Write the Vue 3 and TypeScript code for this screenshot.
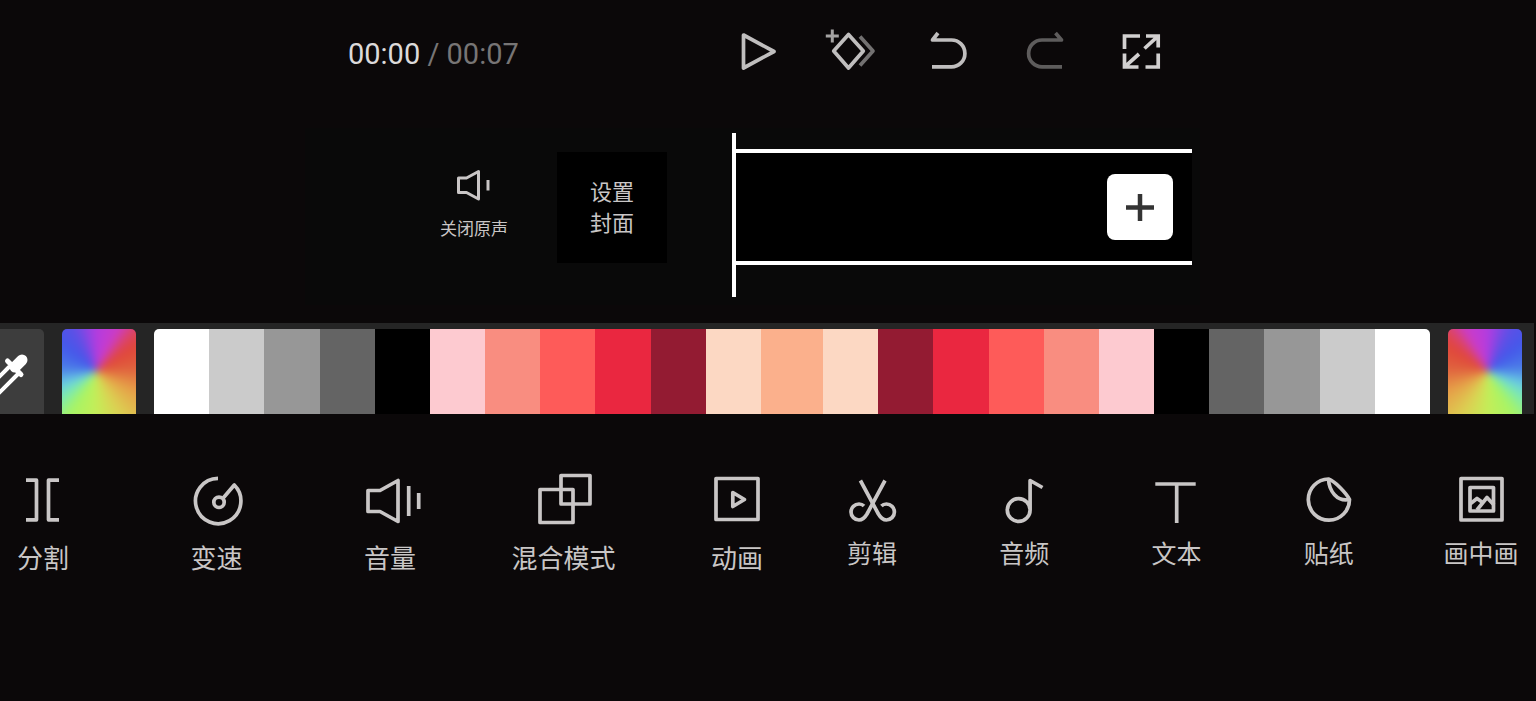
<script setup lang="ts">
interface Tool {
  label: string
  paths: string[]
}

const swatchHalf: string[] = [
  '#ffffff', '#cbcbcb', '#979797', '#646464', '#000000', '#fdcad0',
  '#f98d80', '#fe5b59', '#ea2740', '#931b32', '#fcd8c3',
]
const swatches: string[] = [...swatchHalf, '#fbb08c', ...[...swatchHalf].reverse()]

const clipTools: Tool[] = [
  { label: '分割', paths: ['M13 10.2H23.5V49.8H13', 'M46 10.2H35.5V49.8H46'] },
  {
    label: '变速',
    paths: [
      'M31 8.3A22.7 22.7 0 1 0 47.3 15L36 28.3',
      'M37.2 32.3A5.2 5.2 0 1 1 26.8 32.3A5.2 5.2 0 1 1 37.2 32.3Z',
    ],
  },
  {
    label: '音量',
    paths: ['M8 20.5H20L38 10.5V51.5L20 41.5H8Z', 'M48.7 16V46', 'M58.7 23V39'],
  },
  { label: '混合模式', paths: ['M6 19.5H39V52.5H6Z', 'M27 5.5H56V34H27Z'] },
  { label: '动画', paths: ['M9 8.5H51V49.5H9Z', 'M25.8 22.5L37.5 29.5L25.8 36.5Z'] },
]

const mainTools: Tool[] = [
  {
    label: '剪辑',
    paths: [
      'M43 10.5L25 44Q21.5 50 17 50A8 8 0 1 1 17 34Q20 34 22 36',
      'M18.4 10.5L36.4 44Q39.9 50 44.4 50A8 8 0 1 0 44.4 34Q41.4 34 39.4 36',
    ],
  },
  {
    label: '音频',
    paths: ['M36.1 40A11.4 11.4 0 1 1 13.3 40A11.4 11.4 0 1 1 36.1 40V10.5L48.5 17.5'],
  },
  { label: '文本', paths: ['M8.3 14H48.7', 'M29.7 14V53'] },
  {
    label: '贴纸',
    paths: ['M29.5 9A20.6 20.6 0 1 0 50.5 29.5C48 24 36 11 29.5 9Z', 'M29.5 9C30 21 38 32 50.5 29.5'],
  },
  {
    label: '画中画',
    paths: [
      'M10 8.5H51V50H10Z',
      'M19 17.5H42.5V41H19Z',
      'M19 34L26 28.5L31 32',
      'M26 40L36 27.5L43 35',
    ],
  },
]
</script>

<template>
  <main class="editor">
    <header class="transport">
      <div class="time">
        <span class="now">00:00</span> / 00:07
      </div>
      <div class="controls">
        <button type="button" aria-label="播放">
          <svg class="ctl" viewBox="0 0 60 48"><path d="M15.5 8L46 24.5L15.5 41Z" /></svg>
        </button>
        <button type="button" aria-label="关键帧">
          <svg class="ctl" viewBox="0 0 60 48">
            <path class="dim" d="M36 9.5L49 24L36 38.5" />
            <path d="M24.5 7.5L39.3 24L24.5 41L9.7 24Z" />
            <path class="thin" d="M8.3 2.5V15.5M1.8 9H14.8" />
          </svg>
        </button>
        <button type="button" aria-label="撤销">
          <svg class="ctl" viewBox="0 0 60 48">
            <path d="M18 6L12.5 13H31.5A13.4 13.4 0 0 1 31.5 39.8H12" />
          </svg>
        </button>
        <button type="button" aria-label="重做">
          <svg class="ctl" viewBox="0 0 60 48">
            <path class="off" d="M39.5 6L45.5 13H26A13.4 13.4 0 0 0 26 39.8H46" />
          </svg>
        </button>
        <button type="button" aria-label="全屏">
          <svg class="ctl square" viewBox="0 0 60 48">
            <path d="M28 9H12.5V22M46.2 26.5V40H33.5" />
            <path d="M34 9H46.2V20.5M46 9.2L32.5 21.5" />
            <path d="M12.5 26.5V40H26.5M12.7 39.8L27 27" />
          </svg>
        </button>
      </div>
    </header>

    <section class="timeline">
      <div class="panel">
        <button type="button" class="mute">
          <svg viewBox="0 0 44 40">
            <path d="M6.5 13H14.5L26.5 6.5V34L14.5 27.5H6.5Z" />
            <path d="M36 15V25.5" />
          </svg>
          <span>关闭原声</span>
        </button>
        <button type="button" class="cover">设置<br>封面</button>
        <div class="track">
          <div class="playhead"></div>
          <div class="clip">
            <button type="button" class="add" aria-label="添加">
              <svg viewBox="0 0 28 28"><path d="M14 1V28M0 14.5H28" /></svg>
            </button>
          </div>
        </div>
      </div>
    </section>

    <section class="palette">
      <button type="button" class="dropper" aria-label="吸管">
        <svg viewBox="0 0 44 85">
          <path class="bulb" d="M15 38L22 31" />
          <path class="collar" d="M7.5 32L21 45.5" />
          <path class="tube" d="M9 38L-6 53M18 45L-6 69" />
        </svg>
      </button>
      <button type="button" class="spectrum" aria-label="色谱"></button>
      <div class="strip">
        <button
          v-for="(color, i) in swatches"
          :key="i"
          type="button"
          class="swatch"
          :class="{ middle: i === swatchHalf.length }"
          :style="{ backgroundColor: color }"
          :aria-label="color"
        ></button>
      </div>
      <button type="button" class="spectrum mirrored" aria-label="色谱"></button>
    </section>

    <nav class="tools">
      <div class="group clip-group">
        <button v-for="tool in clipTools" :key="tool.label" type="button" class="tool">
          <svg viewBox="0 0 60 60"><path v-for="d in tool.paths" :key="d" :d="d" /></svg>
          <span>{{ tool.label }}</span>
        </button>
      </div>
      <div class="group main-group">
        <button v-for="tool in mainTools" :key="tool.label" type="button" class="tool">
          <svg viewBox="0 0 60 60"><path v-for="d in tool.paths" :key="d" :d="d" /></svg>
          <span>{{ tool.label }}</span>
        </button>
      </div>
    </nav>
  </main>
</template>

<style>
html,
body {
  margin: 0;
  background: #0b0809;
}
</style>

<style scoped>
.editor {
  min-height: 100vh;
  overflow: hidden;
  background: #0b0809;
  color: #c9c6c6;
  font-family: Roboto, "Noto Sans CJK SC", sans-serif;
}

button {
  margin: 0;
  padding: 0;
  border: 0;
  background: none;
  color: inherit;
  font: inherit;
  cursor: pointer;
}

svg {
  display: block;
  overflow: visible;
  fill: none;
  stroke: #c9c6c6;
}

.transport {
  display: grid;
  grid-template-columns: 348fr 362fr 480fr 346fr;
  align-items: start;
  padding: 27px 0 47px;
}

.time {
  grid-column: 2;
  font-size: 29px;
  line-height: 54px;
  white-space: nowrap;
  color: #777575;
}

.now {
  color: #dcdada;
}

.controls {
  grid-column: 3;
  display: grid;
  grid-template-columns: repeat(5, 1fr);
  justify-items: center;
}

.ctl {
  width: 60px;
  height: 48px;
  stroke-width: 3.7;
  stroke-linejoin: round;
  stroke: #c0bebe;
}

.ctl.square {
  stroke-linejoin: miter;
  stroke: #d2d0d0;
}

.ctl .dim {
  stroke: #737171;
}

.ctl .thin {
  stroke: #a5a3a3;
  stroke-width: 3;
}

.ctl .off {
  stroke: #5e5c5c;
}

.timeline {
  display: grid;
  grid-template-columns: 305fr 895fr 336fr;
  padding-bottom: 18px;
}

.panel {
  grid-column: 2;
  display: grid;
  grid-template-columns: 113fr 112fr 27fr 110fr 65fr 460fr 8fr;
  align-items: start;
  padding: 5px 0 8px;
  background: #090909;
}

.mute {
  grid-column: 2;
  display: flex;
  flex-direction: column;
  align-items: center;
  gap: 12px;
  margin-top: 32px;
  font-size: 17px;
  line-height: 24px;
  white-space: nowrap;
}

.mute svg {
  width: 44px;
  height: 40px;
  stroke-width: 3;
  stroke-linejoin: round;
}

.cover {
  grid-column: 4;
  height: 111px;
  margin-top: 19px;
  background: #000;
  font-size: 22px;
  line-height: 31px;
}

.track {
  grid-column: 6;
  display: flex;
  align-items: flex-start;
}

.playhead {
  width: 4px;
  height: 164px;
  background: #fff;
}

.clip {
  flex: 1;
  display: flex;
  align-items: center;
  justify-content: flex-end;
  box-sizing: border-box;
  height: 116px;
  margin-top: 16px;
  padding-right: 19px;
  border-top: 4px solid #fff;
  border-bottom: 4px solid #fff;
  background: #000;
}

.add {
  display: flex;
  align-items: center;
  justify-content: center;
  width: 66px;
  height: 66px;
  border-radius: 8px;
  background: #fff;
}

.add svg {
  width: 28px;
  height: 28px;
  stroke: #343434;
  stroke-width: 4.5;
}

.palette {
  display: flex;
  gap: 18px;
  height: 85px;
  margin-right: 2px;
  padding: 6px 12px 0 0;
  background: #252525;
}

.dropper {
  width: 44px;
  overflow: hidden;
  border-radius: 0 5px 0 0;
  background: #3d3d3d;
}

.dropper svg {
  width: 44px;
  height: 85px;
  stroke: #fff;
  stroke-linecap: round;
}

.bulb {
  stroke-width: 11;
}

.collar {
  stroke-width: 5;
}

.tube {
  stroke-width: 4;
}

.spectrum {
  display: flex;
  width: 74px;
  overflow: hidden;
  border-radius: 5px 5px 0 0;
}

.spectrum::before {
  content: "";
  flex: none;
  width: 94px;
  height: 105px;
  margin: -10px;
  filter: blur(4px);
  background: conic-gradient(
    from 0deg at 47% 50%,
    #b43ce0 0deg,
    #cb3cc8 28deg,
    #dc4468 42deg,
    #e0463a 56deg,
    #e0623e 86deg,
    #e6a148 118deg,
    #dcd052 150deg,
    #c4ee58 180deg,
    #a8f464 212deg,
    #7cebb0 232deg,
    #68cbe4 250deg,
    #4b7ce8 276deg,
    #4458ea 310deg,
    #5c50e6 332deg,
    #b43ce0 360deg
  );
}

.mirrored {
  transform: scaleX(-1);
}

.strip {
  flex: 1;
  display: flex;
  overflow: hidden;
  border-radius: 5px 5px 0 0;
}

.swatch {
  flex: 55 1 0;
}

.swatch.middle {
  flex-grow: 62;
}

.tools {
  display: flex;
  gap: 37px;
  padding-top: 56px;
}

.group {
  display: flex;
  justify-content: space-between;
}

.clip-group {
  flex: 780 1 0;
}

.main-group {
  flex: 719 1 0;
}

.tool {
  display: flex;
  flex-direction: column;
  align-items: center;
  line-height: 30px;
  white-space: nowrap;
}

.tool svg {
  width: 60px;
  height: 60px;
  stroke-width: 3.7;
  stroke-linejoin: round;
}

.clip-group .tool {
  width: 86px;
  gap: 14px;
  font-size: 26px;
}

.main-group .tool {
  width: 110px;
  gap: 10px;
  font-size: 25px;
}
</style>
